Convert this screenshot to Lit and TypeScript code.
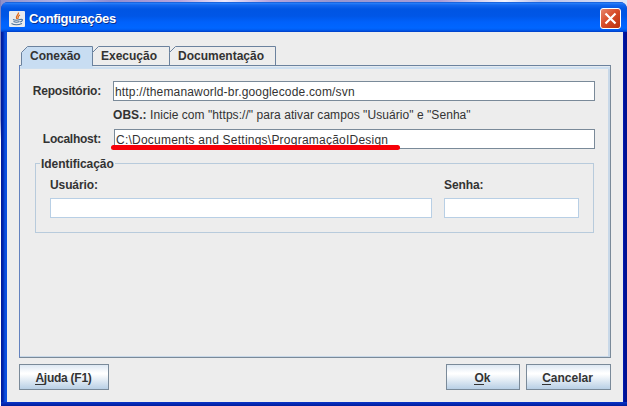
import { LitElement, html, css, svg } from "lit";
import { customElement } from "lit/decorators.js";

@customElement("app-root")
export class AppRoot extends LitElement {
  static styles = css`
    :host {
      display: block;
      width: 627px;
      height: 406px;
      overflow: hidden;
      font: 12px/14px "Liberation Sans", Arial, sans-serif;
      color: #333;
      background: linear-gradient(90deg, #8d90cb 0, #b5b3e4 60px, #8f8ccf 110px, #b9a5dc 180px, #eee8fb 225px, #b6a4dc 270px, #9696cf 330px, #a99cd6 440px, #f4f4fd 505px, #b9bfe8 540px, #dfe6f8 627px);
    }
    * { box-sizing: border-box; }
    .page {
      height: 406px;
      padding: 2px 0 0 1px;
      background: linear-gradient(#7a80c2, #8f98d2 120px, #fff 140px) 0 0 / 1px 100% no-repeat;
    }
    .window {
      height: 404px;
      padding: 0 4px 4px 6px;
      display: flex;
      flex-direction: column;
      border-radius: 7px 7px 0 0;
      background:
        linear-gradient(#0a35c8, #001c9c) 0 100% / 100% 4px no-repeat,
        linear-gradient(90deg, #001a98 0, #0027ae 2px, #0c4fe0 4px, #0a50dc 6px, #0a50dc 619px, #0a3ccc 621px, #0010a0 623px, #00138c 626px);
    }
    .titlebar {
      height: 30px;
      margin: 0 -4px 0 -6px;
      padding: 4px 6px 0 8px;
      display: flex;
      align-items: center;
      border-radius: 7px 7px 0 0;
      background: linear-gradient(#0a48c4 0, #2b82fa 1px, #1266ee 3px, #0055e3 7px, #0056e6 14px, #0061fb 20px, #0066ff 26px, #005bf0 28px, #003dc4 30px);
    }
    .java { display: block; width: 16px; height: 16px; }
    .title {
      flex: 1;
      margin-left: 4px;
      color: #fff;
      font-weight: bold;
      font-size: 13px;
      letter-spacing: -0.32px;
      text-shadow: 1px 1px 0 #0a2f8c;
    }
    .close { display: block; width: 21px; height: 21px; margin-top: -1px; }
    .body {
      flex: 1;
      padding: 14px 12px 12px 12px;
      display: flex;
      flex-direction: column;
      background: #ededed;
    }
    .tabs { position: relative; z-index: 1; display: flex; height: 19px; padding-left: 2px; }
    .tab { position: relative; height: 19px; padding: 3px 0 0 9px; font-weight: bold; white-space: nowrap; }
    .tab svg { position: absolute; left: 0; top: 0; width: 100%; height: 20px; overflow: visible; }
    .tab span { position: relative; }
    .t1 { width: 71px; }
    .t2 { width: 77px; }
    .t3 { width: 106px; }
    .panel {
      height: 293px;
      padding: 12px 15px 0 13px;
      border: 1px solid #7a8a99;
      border-top-color: #6b829e;
      border-left-color: #6382bf;
      box-shadow: inset 0 1px 0 #e4eaf0, inset 0 3px 0 #cddff0, inset -2px 0 0 #c8d8e8, inset 0 -1px 0 #c8d8e8;
    }
    .row { display: grid; grid-template-columns: 80px 1fr; align-items: center; height: 20px; }
    .label { font-weight: bold; white-space: nowrap; justify-self: end; margin-right: 12px; letter-spacing: -0.2px; }
    .field { height: 20px; border: 1px solid #7a8a99; background: #fff; padding: 3px 0 0 1px; white-space: nowrap; }
    .repo { margin-top: 3px; }
    .repo .field { letter-spacing: 0.17px; }
    .hint { margin: 7px 0 0 80px; height: 14px; white-space: nowrap; letter-spacing: 0.06px; }
    .local { position: relative; margin-top: 7px; grid-template-columns: 81px 1fr; }
    .local .label { margin-right: 13px; letter-spacing: -0.25px; }
    .local .field { letter-spacing: 0.23px; }
    .stroke { position: absolute; left: 78px; top: 16px; width: 289px; height: 5px; border-radius: 2.5px; background: #f60008; }
    .group {
      position: relative;
      height: 70px;
      width: 559px;
      margin: 14px 0 0 2px;
      border: 1px solid #b8cbdc;
      padding: 14px 14px 0 14px;
      display: grid;
      grid-template-columns: 382px 135px;
      column-gap: 12px;
      align-content: start;
    }
    .legend { position: absolute; left: 4px; top: -7px; padding: 0 1px; background: #ededed; font-weight: bold; letter-spacing: -0.05px; }
    .caption { display: block; font-weight: bold; margin-bottom: 6px; letter-spacing: -0.1px; }
    .off { border-color: #b8cfe5; }
    .actions { display: flex; gap: 6px; margin-top: 6px; }
    .btn {
      height: 26px;
      border: 1px solid #7a8a99;
      background: linear-gradient(#dde8f3 0, #fff 8px, #fff 9px, #b8cfe5 100%);
      font-weight: bold;
      text-align: center;
      padding-top: 6px;
    }
    .btn u { text-decoration: none; display: inline-block; height: 14px; border-bottom: 1px solid #333; }
    .help { width: 90px; margin-right: auto; padding-right: 1px; letter-spacing: -0.25px; }
    .ok { width: 74px; padding-right: 1px; }
    .cancel { width: 85px; padding-right: 2px; }
  `;

  private tab(cls: string, label: string, w: number, selected = false) {
    const outline = `M0.5 19.5V6.5L6.5 0.5H${w + 0.5}V19.5`;
    const fill = selected ? "#c8ddf2" : "#ededed";
    return html`<div class="tab ${cls}">
      <svg>
        ${selected ? svg`<rect x="0" y="18" width=${w + 1} height="4" fill=${fill} />` : ""}
        ${svg`<path d=${outline} fill=${fill} stroke="#6b829e" />`}
        ${selected ? "" : svg`<path d="M0 19.5H${w + 1}" stroke="#6b829e" />`}
      </svg>
      <span>${label}</span>
    </div>`;
  }

  render() {
    return html`<div class="page"><div class="window">
      <div class="titlebar">
        <svg class="java" viewBox="0 0 16 16">
          <rect width="16" height="16" rx="1" fill="#e9ecef" />
          <path d="M9.5 1.500C10 4 6 4.500 7.800 8M11 4C8 5.500 9.800 6.500 8.700 8" fill="none" stroke="#e06a18" stroke-width="1.200" />
          <path d="M4 8.500Q7 10 11 8.500M4.500 10.500Q7.500 12 10.500 10.500M2.500 12.500Q7 15 13 12.500M11 8.500C15 7.500 13.500 10.500 11 11" fill="none" stroke="#4b7299" stroke-width="1.100" />
        </svg>
        <div class="title">Configurações</div>
        <svg class="close" viewBox="0 0 21 21">
          <defs><linearGradient id="red" x1="0" y1="0" x2="1" y2="1">
            <stop offset="0" stop-color="#e88a70" /><stop offset=".45" stop-color="#d84e2c" /><stop offset="1" stop-color="#b82e0c" />
          </linearGradient></defs>
          <rect x=".5" y=".5" width="20" height="20" rx="2.500" fill="url(#red)" stroke="#fff" />
          <path d="M5.500 5.500L15.500 15.500M15.500 5.500L5.500 15.500" stroke="#fff" stroke-width="2.200" />
        </svg>
      </div>
      <div class="body">
        <div class="tabs">
          ${this.tab("t1", "Conexão", 71, true)}
          ${this.tab("t2", "Execução", 77)}
          ${this.tab("t3", "Documentação", 106)}
        </div>
        <div class="panel">
          <div class="row repo">
            <span class="label">Repositório:</span>
            <div class="field">http://themanaworld-br.googlecode.com/svn</div>
          </div>
          <div class="hint"><b>OBS.:</b> Inicie com "https://" para ativar campos "Usuário" e "Senha"</div>
          <div class="row local">
            <span class="label">Localhost:</span>
            <div class="field">C:\\Documents and Settings\\ProgramaçãoIDesign</div>
            <div class="stroke"></div>
          </div>
          <div class="group">
            <span class="legend">Identificação</span>
            <div><span class="caption">Usuário:</span><div class="field off"></div></div>
            <div><span class="caption">Senha:</span><div class="field off"></div></div>
          </div>
        </div>
        <div class="actions">
          <div class="btn help"><u>A</u>juda (F1)</div>
          <div class="btn ok"><u>O</u>k</div>
          <div class="btn cancel"><u>C</u>ancelar</div>
        </div>
      </div>
    </div></div>`;
  }
}
